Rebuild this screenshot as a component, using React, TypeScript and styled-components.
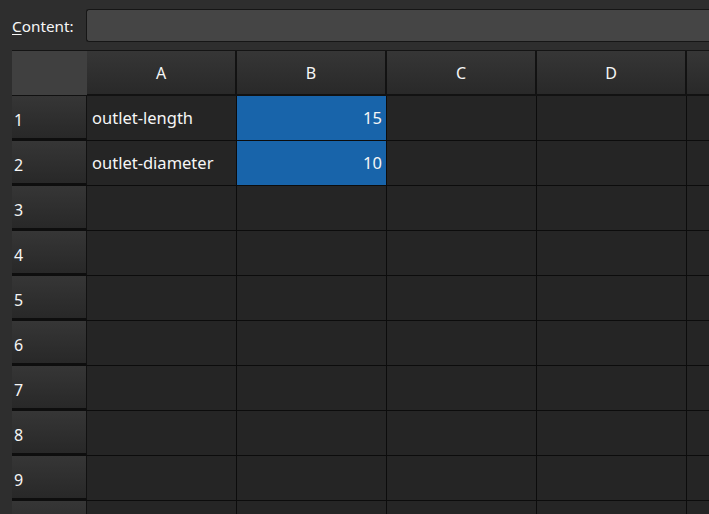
import React from "react";
import styled, { createGlobalStyle } from "styled-components";

const Global = createGlobalStyle`
  html, body { margin: 0; padding: 0; background: #2e2e2e; }
  body { width: 709px; height: 514px; overflow: hidden; font-family: "Noto Sans", "Open Sans", sans-serif; }
`;

const Page = styled.div`
  width: 709px;
  height: 514px;
  overflow: hidden;
  background: #2e2e2e;
  display: flex;
  flex-direction: column;
`;

const ContentBar = styled.div`
  display: flex;
  align-items: center;
  height: 33px;
  margin-top: 9px;
  padding-left: 12px;
  gap: 12px;
`;

const Label = styled.label`
  color: #f6f6f6;
  font-size: 15.3px;
  white-space: nowrap;
  u { text-decoration: underline; text-underline-offset: 2px; }
`;

const Input = styled.div`
  flex: 1;
  height: 31px;
  background: #454545;
  border: 1px solid #161616;
  border-right: none;
  border-radius: 3px 0 0 3px;
`;

const Grid = styled.div`
  margin-top: 8px;
  margin-left: 12px;
  display: grid;
  grid-template-columns: 75px repeat(5, 150px);
  grid-auto-rows: 45px;
  border-top: 1px solid #141414;
`;

const Corner = styled.div`
  background: #404040;
  border-bottom: 1px solid #111;
`;

const ColHeader = styled.div`
  background: linear-gradient(#363636, #292929);
  border-right: 2px solid #121212;
  border-bottom: 2px solid #121212;
  color: #f6f6f6;
  font-size: 16px;
  display: flex;
  align-items: center;
  justify-content: center;
`;

const RowHeader = styled.div`
  background: linear-gradient(#363636, #282828);
  border-bottom: 3px solid #0e0e0e;
  border-right: 1px solid #111;
  color: #f6f6f6;
  font-size: 16px;
  display: flex;
  align-items: flex-end;
  padding: 0 0 7px 2px;
  box-sizing: border-box;
`;

const Cell = styled.div<{ $selected?: boolean; $align?: "left" | "right" }>`
  background: ${(p) => (p.$selected ? "#1864aa" : "#252525")};
  border-right: 1px solid #0c0c0c;
  border-bottom: 1px solid #0c0c0c;
  color: #f6f6f6;
  font-size: 16.5px;
  display: flex;
  align-items: center;
  justify-content: ${(p) => (p.$align === "right" ? "flex-end" : "flex-start")};
  padding: 0 4px 1px 5px;
  box-sizing: border-box;
  white-space: nowrap;
  overflow: hidden;
`;

const cols = ["A", "B", "C", "D", ""];
const data: Record<string, { a: string; b: string }> = {
  "1": { a: "outlet-length", b: "15" },
  "2": { a: "outlet-diameter", b: "10" },
};

export default function App() {
  const rows = Array.from({ length: 10 }, (_, i) => i + 1);
  return (
    <Page>
      <Global />
      <ContentBar>
        <Label>
          <u>C</u>ontent:
        </Label>
        <Input />
      </ContentBar>
      <Grid>
        <Corner />
        {cols.map((c, i) => (
          <ColHeader key={i}>{c}</ColHeader>
        ))}
        {rows.map((n) => {
          const r = String(n);
          return (
            <React.Fragment key={r}>
              <RowHeader>{n < 10 ? r : ""}</RowHeader>
              <Cell>{data[r]?.a}</Cell>
              <Cell $selected={!!data[r]} $align="right">
                {data[r]?.b}
              </Cell>
              <Cell />
              <Cell />
              <Cell />
            </React.Fragment>
          );
        })}
      </Grid>
    </Page>
  );
}
